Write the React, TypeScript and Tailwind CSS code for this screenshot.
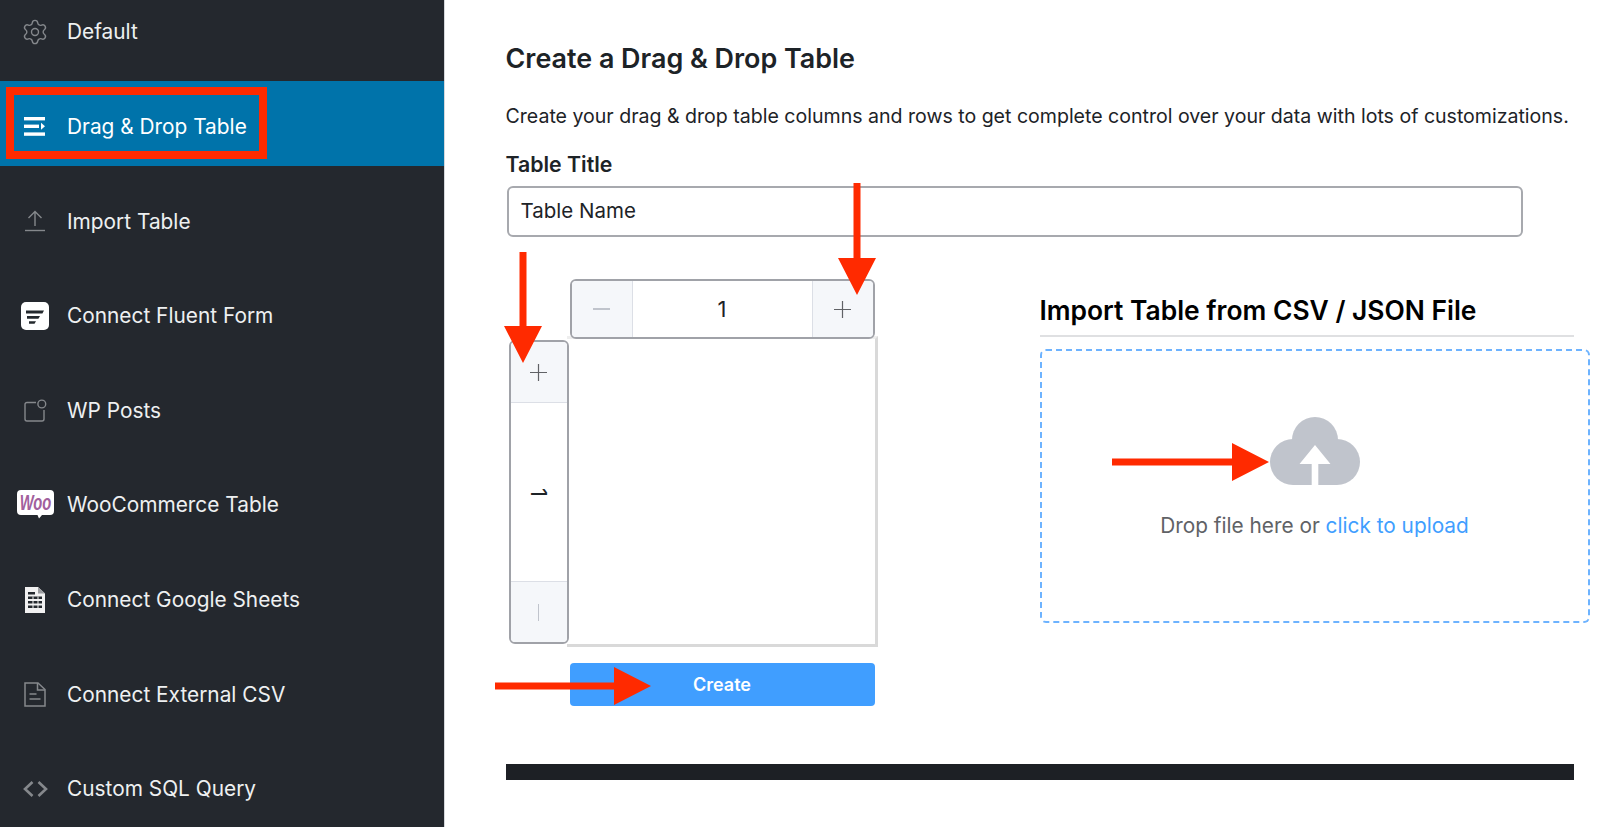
import { Settings } from "lucide-react";

const menuItems = [
  { label: "Default", icon: <Settings size={28} color="#85888c" strokeWidth={1.200} /> },
  { label: "Drag & Drop Table", icon: <DragIcon />, active: true },
  { label: "Import Table", icon: <ImportIcon /> },
  { label: "Connect Fluent Form", icon: <FluentIcon /> },
  { label: "WP Posts", icon: <PostsIcon /> },
  { label: "WooCommerce Table", icon: <WooIcon /> },
  { label: "Connect Google Sheets", icon: <SheetsIcon /> },
  { label: "Connect External CSV", icon: <CsvIcon /> },
  { label: "Custom SQL Query", icon: <CodeIcon /> },
];

function DragIcon() {
  return (
    <svg width="22" height="20" viewBox="0 0 22 20" fill="#ffffff">
      <rect x="0" y="0" width="21" height="3.4" />
      <rect x="0" y="7.6" width="15" height="3.4" />
      <path d="M17 5.8l4 3.5-4 3.5z" />
      <rect x="0" y="15.4" width="21" height="3.4" />
    </svg>
  );
}

function ImportIcon() {
  return (
    <svg width="22" height="22" viewBox="0 0 22 22" fill="none" stroke="#85888c" strokeWidth="1.4">
      <path d="M11 16V1.5M4.5 8L11 1.5 17.5 8" />
      <path d="M1 20.5h20" />
    </svg>
  );
}

function FluentIcon() {
  return (
    <svg width="28" height="28" viewBox="0 0 28 28">
      <rect width="28" height="28" rx="5" fill="#ffffff" />
      <path d="M5 8.5h18l-1.6 3H5z M6 14h13l-1.6 2.8H6z M8 19.2h7l-1.5 2.5H8z" fill="#23282d" />
    </svg>
  );
}

function PostsIcon() {
  return (
    <svg width="23" height="23" viewBox="0 0 23 23" fill="none" stroke="#85888c" strokeWidth="1.4">
      <path d="M12 3.5H3A2 2 0 0 0 1 5.500V20a2 2 0 0 0 2 2h15a2 2 0 0 0 2-2v-9" />
      <circle cx="17.800" cy="5" r="3.900" />
    </svg>
  );
}

function WooIcon() {
  return (
    <svg width="37" height="29" viewBox="0 0 37 29">
      <path d="M4 0h29a4 4 0 0 1 4 4v17a4 4 0 0 1-4 4H25l-3 3.500-1.500-3.500H4a4 4 0 0 1-4-4V4a4 4 0 0 1 4-4z" fill="#ffffff" />
      <text transform="translate(18.500 19.500) scale(0.950 1.400)" textAnchor="middle" fontFamily="'Liberation Sans', sans-serif" fontSize="15.500" fontWeight="700" fontStyle="italic" fill="#a2609d">Woo</text>
    </svg>
  );
}

function SheetsIcon() {
  return (
    <svg width="20" height="26" viewBox="0 0 20 26">
      <path d="M0 0h13l7 6.500V26H0z" fill="#f1f1f1" />
      <path d="M13 0v6.500h7z" fill="#9a9c9f" />
      <path d="M3 5h7v2.500H3zM3 9.500h14V12H3zM3 14h14v2.500H3zM3 18.500h14V21H3z" fill="#23282d" />
      <path d="M7.500 9.500h1v11.500h-1zM12.500 9.500h1v11.500h-1z" fill="#f1f1f1" />
    </svg>
  );
}

function CsvIcon() {
  return (
    <svg width="22" height="25" viewBox="0 0 22 25" fill="none" stroke="#85888c" strokeWidth="1.5">
      <path d="M1 1h13l7 6.500V24H1z" />
      <path d="M13.500 1v7H21M5.500 12h7M5.500 17h11" />
    </svg>
  );
}

function CodeIcon() {
  return (
    <svg width="25" height="18" viewBox="0 0 25 18" fill="none" stroke="#85888c" strokeWidth="2.600">
      <path d="M9.500 2L2 9l7.500 7M15.500 2L23 9l-7.500 7" />
    </svg>
  );
}

function CloudIcon() {
  return (
    <svg width="90" height="68" viewBox="0 0 90 68">
      <g fill="#c0c4cc">
        <circle cx="45" cy="23" r="23" />
        <circle cx="23" cy="45" r="23" />
        <circle cx="67" cy="45" r="23" />
        <rect x="23" y="30" width="44" height="38" />
      </g>
      <path d="M45 28l15.500 19H48.300v21h-6.600V47H29.500z" fill="#ffffff" />
    </svg>
  );
}

function Plus() {
  return (
    <svg width="17" height="17" viewBox="0 0 17 17" stroke="#606266" strokeWidth="1.200">
      <path d="M8.500 0v17M0 8.500h17" />
    </svg>
  );
}

// Red annotation arrows drawn on top of the screenshot
function ArrowDown({ className, shaft }: { className: string; shaft: number }) {
  return (
    <svg className={`absolute z-20 ${className}`} width="38" height={shaft + 37} fill="#ff2a00">
      <path d={`M15.500 0h7v${shaft}H38L19 ${shaft + 37}L0 ${shaft}h15.500z`} />
    </svg>
  );
}

function ArrowRight({ className, shaft }: { className: string; shaft: number }) {
  return (
    <svg className={`absolute z-20 ${className}`} width={shaft + 37} height="38" fill="#ff2a00">
      <path d={`M0 15.500h${shaft}V0L${shaft + 37} 19L${shaft} 38V22.500H0z`} />
    </svg>
  );
}

export default function App() {
  return (
    <div className="relative flex h-[827px] w-[1600px] overflow-hidden bg-white font-['Inter',sans-serif] text-[#1d2327]">
      {/* Sidebar */}
      <aside className="h-full w-[445px] shrink-0 overflow-hidden border-r border-[#d5d8dc] bg-[#24282e]">
        <div className="-mt-[13.500px] flex flex-col gap-[9.6px]">
          {menuItems.map((item) => (
            <div
              key={item.label}
              className={`flex h-[85px] shrink-0 items-center pt-[6px] text-[20.850px] ${
                item.active ? "bg-[#0073aa] text-white" : "text-[#eef0f1]"
              }`}
            >
              <span className="flex w-[67px] shrink-0 items-center justify-center pl-[3px]">{item.icon}</span>
              <span>{item.label}</span>
            </div>
          ))}
        </div>
      </aside>

      {/* Main panel */}
      <main className="min-w-0 flex-1 pl-[60.500px] pt-[41px]">
        <h1 className="text-[26.900px] leading-[34px] font-semibold text-[#1d2327]">Create a Drag &amp; Drop Table</h1>
        <p className="mt-[28px] whitespace-nowrap text-[19.560px] leading-[26px]">
          Create your drag &amp; drop table columns and rows to get complete control over your data with lots of customizations.
        </p>
        <label className="mt-[22px] block text-[21.300px] leading-[26px] font-semibold">Table Title</label>
        <div className="mt-[9px] ml-px flex h-[51px] w-[1016px] items-center rounded-[6px] border-2 border-[#a7a9ae] px-[12px] text-[20.500px]">
          Table Name
        </div>

        <div className="mt-[42px] flex items-start">
          {/* Table size picker */}
          <div className="flex w-[534px] shrink-0 flex-col">
            <div className="relative z-10 ml-[64px] flex h-[60px] w-[305px] rounded-[6px] border-2 border-[#a0a2a8] bg-white">
              <div className="flex w-[61px] items-center justify-center rounded-l-[4px] border-r border-[#dcdfe6] bg-[#f5f7fa]">
                <span className="h-[1.500px] w-[17px] bg-[#c0c4cc]"></span>
              </div>
              <div className="flex flex-1 items-center justify-center text-[22px]">1</div>
              <div className="flex w-[61px] items-center justify-center rounded-r-[4px] border-l border-[#dcdfe6] bg-[#f5f7fa]">
                <Plus />
              </div>
            </div>
            <div className="-mt-[3px] ml-[3px] flex items-start">
              <div className="relative z-10 mt-[4px] flex h-[304px] w-[60px] shrink-0 flex-col rounded-[6px] border-2 border-[#a0a2a8] bg-white">
                <div className="flex h-[61px] items-center justify-center rounded-t-[4px] border-b border-[#dcdfe6] bg-[#f5f7fa]">
                  <Plus />
                </div>
                <div className="flex flex-1 items-center justify-center text-[22px]">
                  <span className="rotate-90">1</span>
                </div>
                <div className="flex h-[61px] items-center justify-center rounded-b-[4px] border-t border-[#dcdfe6] bg-[#f5f7fa]">
                  <span className="h-[17px] w-[1.500px] bg-[#c0c4cc]"></span>
                </div>
              </div>
              <div className="-ml-[2px] h-[311px] w-[311px] border-[3px] border-l-0 border-t-[#eeeeee] border-r-[#d9d9d9] border-b-[#d9d9d9] bg-white"></div>
            </div>
            <button className="mt-[16px] ml-[64px] h-[43px] w-[305px] rounded-[4px] bg-[#409eff] text-[18px] font-semibold text-white">
              Create
            </button>
          </div>

          {/* CSV / JSON import */}
          <div className="w-[550px] shrink-0">
            <h2 className="mt-[13px] text-[26.400px] leading-[36px] font-semibold text-black">Import Table from CSV / JSON File</h2>
            <div className="mt-[7px] h-[2px] w-[534px] bg-[#dfe0e2]"></div>
            <div className="mt-[12px] flex h-[274px] w-[550px] flex-col items-center rounded-[6px] border-2 border-dashed border-[#6db3ff] pt-[66px]">
              <CloudIcon />
              <div className="mt-[28px] text-[20.800px] leading-[26px] text-[#606266]">
                Drop file here or <span className="text-[#409eff]">click to upload</span>
              </div>
            </div>
          </div>
        </div>

        <div className="mt-[58px] h-[16px] w-[1068px] bg-[#1d2025]"></div>
      </main>

      {/* Annotations */}
      <div className="absolute top-[87px] left-[6px] z-20 h-[72px] w-[261px] border-[8px] border-[#ff2a00]"></div>
      <ArrowDown className="top-[183px] left-[838px]" shaft={75} />
      <ArrowDown className="top-[252px] left-[504px]" shaft={74} />
      <ArrowRight className="top-[667px] left-[495px]" shaft={119} />
      <ArrowRight className="top-[443px] left-[1112px]" shaft={120} />
    </div>
  );
}
